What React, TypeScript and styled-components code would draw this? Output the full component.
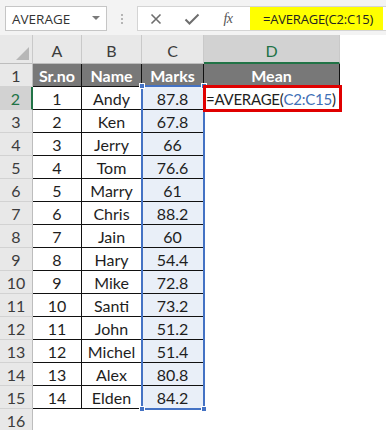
import React from "react";
import styled, { createGlobalStyle } from "styled-components";

const Global = createGlobalStyle`
  html, body { margin: 0; padding: 0; background: #ffffff; }
  body { font-family: "Lato", "Liberation Sans", sans-serif; overflow: hidden; }
  *, *::before, *::after { box-sizing: border-box; }
`;

const Page = styled.div`
  width: 386px;
  height: 430px;
  overflow: hidden;
  background: #ffffff;
`;

const Toolbar = styled.div`
  height: 35px;
  background: #f3f3f3;
  display: flex;
  align-items: flex-start;
  padding: 6px 0 0 5px;
`;

const NameBox = styled.div`
  width: 102px;
  height: 25px;
  background: #ffffff;
  border: 1px solid #c6c6c6;
  display: flex;
  align-items: center;
  justify-content: space-between;
  padding: 0 6px 0 6px;
  font-family: "Open Sans", "Liberation Sans", sans-serif;
  font-size: 13.5px;
  color: #333;
`;

const DropArrow = styled.span`
  width: 0;
  height: 0;
  border-left: 4px solid transparent;
  border-right: 4px solid transparent;
  border-top: 4px solid #7a7a7a;
  margin-top: -2px;
`;

const Dots = styled.div`
  width: 30px;
  height: 25px;
  display: flex;
  flex-direction: column;
  align-items: center;
  justify-content: center;
  gap: 2px;
  span {
    width: 2px;
    height: 2px;
    background: #b5b5b5;
  }
`;

const FormulaBox = styled.div`
  flex: 1;
  height: 25px;
  background: #ffffff;
  border: 1px solid #d4d4d4;
  border-right: none;
  display: flex;
  align-items: stretch;
`;

const IconButton = styled.div`
  width: 36px;
  display: flex;
  align-items: center;
  justify-content: center;
  color: #6a6a6a;
`;

const FxText = styled.span`
  font-family: "Liberation Serif", "DejaVu Serif", serif;
  font-style: italic;
  font-size: 14px;
  color: #555;
  letter-spacing: -0.5px;
`;

const FormulaHighlight = styled.div`
  margin-left: 4px;
  width: 133px;
  background: #ffff00;
  display: flex;
  align-items: center;
  padding-left: 13px;
  font-family: "Open Sans", "Liberation Sans", sans-serif;
  font-size: 13px;
  letter-spacing: -0.2px;
  color: #222;
`;

const Sheet = styled.div`
  position: relative;
  display: grid;
  grid-template-columns: 33px 49px 60px 62px 136px 1fr;
  grid-template-rows: 29px repeat(16, 23px);
  font-size: 16px;
`;

const Corner = styled.div`
  background: #e8e8e8;
  border-right: 1px solid #c9c9c9;
  border-bottom: 1px solid #bdbdbd;
  position: relative;
  &::after {
    content: "";
    position: absolute;
    right: 3px;
    bottom: 3px;
    width: 0;
    height: 0;
    border-left: 13px solid transparent;
    border-bottom: 13px solid #b7b7b7;
  }
`;

const ColHeader = styled.div<{ $sel?: boolean }>`
  background: ${(p) => (p.$sel ? "#d2d2d2" : "#e8e8e8")};
  border-right: 1px solid #c9c9c9;
  border-bottom: ${(p) => (p.$sel ? "2px solid #217346" : "1px solid #bdbdbd")};
  display: flex;
  align-items: center;
  justify-content: center;
  padding-top: 3px;
  color: ${(p) => (p.$sel ? "#217346" : "#3c3c3c")};
  font-size: 16px;
`;

const ColFill = styled.div`
  background: #ffffff;
`;

const RowHeader = styled.div<{ $sel?: boolean }>`
  background: ${(p) => (p.$sel ? "#d2d2d2" : "#e8e8e8")};
  border-right: ${(p) => (p.$sel ? "2px solid #217346" : "1px solid #bdbdbd")};
  border-bottom: 1px solid #d2d2d2;
  display: flex;
  align-items: center;
  justify-content: center;
  color: ${(p) => (p.$sel ? "#217346" : "#3c3c3c")};
  font-size: 16px;
`;

type Kind = "head" | "data" | "range" | "empty";

const Cell = styled.div<{ $kind: Kind }>`
  display: flex;
  align-items: center;
  justify-content: center;
  white-space: nowrap;
  font-size: 16px;
  color: ${(p) => (p.$kind === "head" ? "#ffffff" : "#1e1e1e")};
  font-weight: ${(p) => (p.$kind === "head" ? 700 : 400)};
  background: ${(p) =>
    p.$kind === "head" ? "#787878" : p.$kind === "range" ? "#e9eff8" : "#ffffff"};
  border-right: ${(p) => (p.$kind === "empty" ? "none" : "1px solid #111")};
  border-bottom: ${(p) => (p.$kind === "empty" ? "none" : "1px solid #111")};
`;

const RangeBox = styled.div`
  position: absolute;
  grid-column: 4 / 5;
  grid-row: 3 / 17;
  top: -2px;
  left: -1px;
  right: -1px;
  bottom: -1px;
  border: 2px solid #4472c4;
  pointer-events: none;
`;

const Handle = styled.span<{ $v: "top" | "bottom"; $h: "left" | "right" }>`
  position: absolute;
  width: 6px;
  height: 6px;
  background: #4472c4;
  border: 1px solid #ffffff;
  ${(p) => p.$v}: -4px;
  ${(p) => p.$h}: -4px;
`;

const ActiveBox = styled.div`
  position: absolute;
  grid-column: 5 / 6;
  grid-row: 3 / 4;
  top: -2px;
  left: -1px;
  right: -2px;
  bottom: -2px;
  border: 3px solid #e00000;
  display: flex;
  align-items: center;
  padding-left: 0;
  background: #ffffff;
  font-size: 15px;
  letter-spacing: -0.25px;
  color: #1e1e1e;
  white-space: nowrap;
`;

const RefText = styled.span`
  color: #3f6fb6;
`;

const rows: [string, string, string][] = [
  ["1", "Andy", "87.8"],
  ["2", "Ken", "67.8"],
  ["3", "Jerry", "66"],
  ["4", "Tom", "76.6"],
  ["5", "Marry", "61"],
  ["6", "Chris", "88.2"],
  ["7", "Jain", "60"],
  ["8", "Hary", "54.4"],
  ["9", "Mike", "72.8"],
  ["10", "Santi", "73.2"],
  ["11", "John", "51.2"],
  ["12", "Michel", "51.4"],
  ["13", "Alex", "80.8"],
  ["14", "Elden", "84.2"],
];

const CrossIcon = () => (
  <svg width="14" height="14" viewBox="0 0 14 14">
    <path d="M2.5 2.5 L11.5 11.5 M11.5 2.5 L2.5 11.5" stroke="#6e6e6e" strokeWidth="1.6" fill="none" />
  </svg>
);

const CheckIcon = () => (
  <svg width="16" height="14" viewBox="0 0 16 14">
    <path d="M1.5 7.5 L5.5 11.5 L14.5 2.5" stroke="#6e6e6e" strokeWidth="2" fill="none" />
  </svg>
);

export default function App() {
  return (
    <Page>
      <Global />
      <Toolbar>
        <NameBox>
          <span>AVERAGE</span>
          <DropArrow />
        </NameBox>
        <Dots>
          <span />
          <span />
          <span />
        </Dots>
        <FormulaBox>
          <IconButton>
            <CrossIcon />
          </IconButton>
          <IconButton>
            <CheckIcon />
          </IconButton>
          <IconButton>
            <FxText>fx</FxText>
          </IconButton>
          <FormulaHighlight>=AVERAGE(C2:C15)</FormulaHighlight>
        </FormulaBox>
      </Toolbar>
      <Sheet>
        <Corner />
        <ColHeader>A</ColHeader>
        <ColHeader>B</ColHeader>
        <ColHeader>C</ColHeader>
        <ColHeader $sel>D</ColHeader>
        <ColFill />

        <RowHeader>1</RowHeader>
        <Cell $kind="head">Sr.no</Cell>
        <Cell $kind="head">Name</Cell>
        <Cell $kind="head">Marks</Cell>
        <Cell $kind="head">Mean</Cell>
        <Cell $kind="empty" />

        {rows.map((r, i) => (
          <React.Fragment key={r[0]}>
            <RowHeader $sel={i === 0}>{i + 2}</RowHeader>
            <Cell $kind="data">{r[0]}</Cell>
            <Cell $kind="data">{r[1]}</Cell>
            <Cell $kind="range">{r[2]}</Cell>
            <Cell $kind="empty" />
            <Cell $kind="empty" />
          </React.Fragment>
        ))}

        <RowHeader>16</RowHeader>
        <Cell $kind="empty" />
        <Cell $kind="empty" />
        <Cell $kind="empty" />
        <Cell $kind="empty" />
        <Cell $kind="empty" />

        <RangeBox>
          <Handle $v="top" $h="left" />
          <Handle $v="top" $h="right" />
          <Handle $v="bottom" $h="left" />
          <Handle $v="bottom" $h="right" />
        </RangeBox>
        <ActiveBox>
          =AVERAGE(<RefText>C2:C15</RefText>)
        </ActiveBox>
      </Sheet>
    </Page>
  );
}
